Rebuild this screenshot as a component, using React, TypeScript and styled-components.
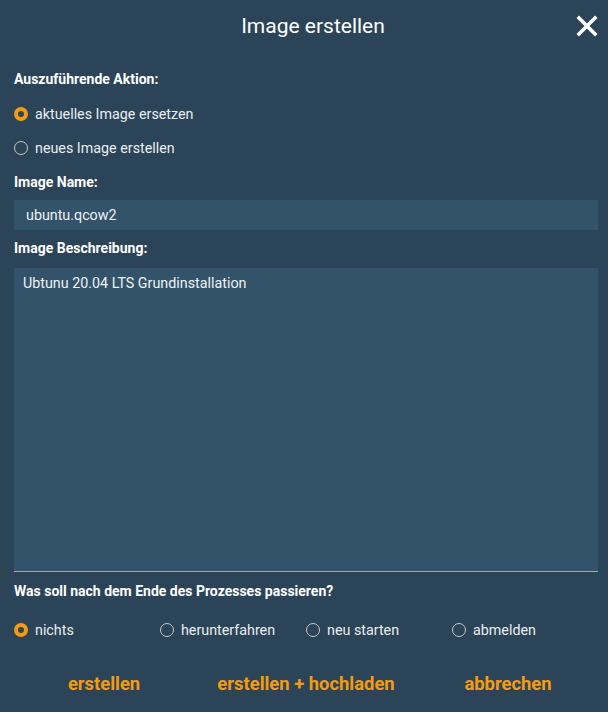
import React, { useEffect, useRef, useState } from 'react';
import styled, { createGlobalStyle } from 'styled-components';

const GlobalStyle = createGlobalStyle`
  html, body {
    margin: 0;
    padding: 0;
    background: #2b4458;
  }
  body {
    font-family: Roboto, "Liberation Sans", sans-serif;
  }
`;

const ORANGE = '#f49c10';

const Dialog = styled.div`
  width: 608px;
  height: 712px;
  box-sizing: border-box;
  background: #2b4458;
  padding: 0 10px 0 14px;
  display: flex;
  flex-direction: column;
  color: #ffffff;
`;

const Header = styled.div`
  position: relative;
  height: 52px;
  display: flex;
  align-items: center;
  justify-content: center;
`;

const Title = styled.h1`
  margin: 0 0 0 14px;
  font-size: 21px;
  font-weight: 400;
  color: #ffffff;
`;

const CloseButton = styled.button`
  position: absolute;
  right: 0;
  top: 15px;
  width: 22px;
  height: 22px;
  padding: 0;
  border: none;
  background: none;
  cursor: pointer;
  display: flex;
`;

const Label = styled.div<{ $top: number }>`
  margin-top: ${(p) => p.$top}px;
  height: 20px;
  line-height: 20px;
  font-size: 14px;
  font-weight: 700;
  color: #ffffff;
`;

const RadioRow = styled.label`
  height: 34px;
  display: flex;
  align-items: center;
  gap: 7px;
  font-size: 14.3px;
  color: #e9eef2;
  cursor: pointer;
`;

const RadioInput = styled.input`
  appearance: none;
  margin: 0;
  width: 14px;
  height: 14px;
  border-radius: 50%;
  box-sizing: border-box;
  border: 1.5px solid #c4c9cd;
  background: transparent;
  flex-shrink: 0;
  cursor: pointer;

  &:checked {
    border: 4.5px solid ${ORANGE};
    background: #2b4458;
  }
`;

const RadioGroup = styled.div`
  margin-top: 8px;
`;

const RadioGrid = styled.div`
  margin-top: 12px;
  display: grid;
  grid-template-columns: repeat(4, 1fr);
`;

const TextInput = styled.input`
  margin-top: 8px;
  height: 30px;
  box-sizing: border-box;
  border: none;
  outline: none;
  background: #33536a;
  color: #eef2f5;
  font-family: inherit;
  font-size: 14.3px;
  padding: 0 12px;
`;

const TextArea = styled.textarea`
  margin-top: 10px;
  height: 304px;
  box-sizing: border-box;
  border: none;
  border-bottom: 1px solid ${ORANGE};
  outline: none;
  resize: none;
  background: #33536a;
  color: #eef2f5;
  caret-color: #eef2f5;
  font-family: inherit;
  font-size: 14.3px;
  line-height: 20px;
  padding: 5px 9px;
`;

const Actions = styled.div`
  margin: 21px -11px 0 -11px;
  display: grid;
  grid-template-columns: repeat(3, 1fr);
`;

const ActionButton = styled.button`
  height: 30px;
  border: none;
  background: none;
  padding: 0;
  color: ${ORANGE};
  font-family: inherit;
  font-size: 18.4px;
  font-weight: 700;
  cursor: pointer;
`;

function Radio(props: { name: string; label: string; checked: boolean; onSelect: () => void }) {
  return (
    <RadioRow>
      <RadioInput type="radio" name={props.name} checked={props.checked} onChange={props.onSelect} />
      {props.label}
    </RadioRow>
  );
}

const afterOptions = ['nichts', 'herunterfahren', 'neu starten', 'abmelden'];

export default function App() {
  const [action, setAction] = useState('replace');
  const [after, setAfter] = useState('nichts');
  const areaRef = useRef<HTMLTextAreaElement>(null);

  useEffect(() => {
    const el = areaRef.current;
    if (el) {
      el.focus();
      el.setSelectionRange(el.value.length, el.value.length);
    }
  }, []);

  return (
    <>
      <GlobalStyle />
      <Dialog>
        <Header>
          <Title>Image erstellen</Title>
          <CloseButton aria-label="schließen">
            <svg width="22" height="22" viewBox="0 0 22 22">
              <path d="M3 3 L19 19 M19 3 L3 19" stroke="#ffffff" strokeWidth="3.6" strokeLinecap="square" />
            </svg>
          </CloseButton>
        </Header>

        <Label $top={17}>Auszuführende Aktion:</Label>
        <RadioGroup>
          <Radio name="action" label="aktuelles Image ersetzen" checked={action === 'replace'} onSelect={() => setAction('replace')} />
          <Radio name="action" label="neues Image erstellen" checked={action === 'new'} onSelect={() => setAction('new')} />
        </RadioGroup>

        <Label $top={7}>Image Name:</Label>
        <TextInput defaultValue="ubuntu.qcow2" />

        <Label $top={8}>Image Beschreibung:</Label>
        <TextArea ref={areaRef} defaultValue="Ubtunu 20.04 LTS Grundinstallation" />

        <Label $top={9}>Was soll nach dem Ende des Prozesses passieren?</Label>
        <RadioGrid>
          {afterOptions.map((o) => (
            <Radio key={o} name="after" label={o} checked={after === o} onSelect={() => setAfter(o)} />
          ))}
        </RadioGrid>

        <Actions>
          <ActionButton>erstellen</ActionButton>
          <ActionButton>erstellen + hochladen</ActionButton>
          <ActionButton>abbrechen</ActionButton>
        </Actions>
      </Dialog>
    </>
  );
}
